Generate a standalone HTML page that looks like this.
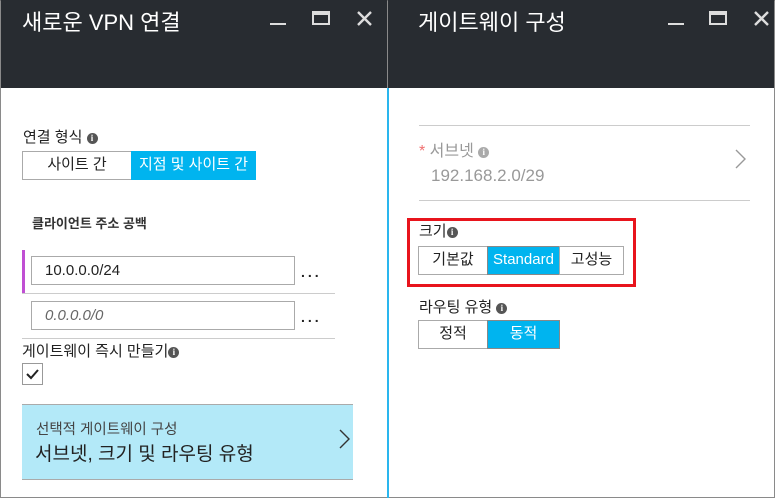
<!DOCTYPE html>
<html><head><meta charset="utf-8"><style>
*{margin:0;padding:0;box-sizing:border-box}
body{width:775px;height:498px;position:relative;background:#fff;font-family:"Segoe UI","Liberation Sans","Noto Sans CJK KR",sans-serif;overflow:hidden;color:#222}
.a{position:absolute}
.hdr{background:#282c31;top:0;height:88px}
.t{color:#fff;font-size:22px;top:5px;white-space:nowrap}
.info{display:inline-block;width:11px;height:11px;border-radius:50%;background:#555;color:#fff;font-size:9px;line-height:11px;text-align:center;font-weight:bold;vertical-align:1px;font-family:"Liberation Serif",serif}
.btn{position:absolute;border:1px solid #aaa;font-size:15px;text-align:center;line-height:26px;background:#fff;white-space:nowrap}
.on{background:#00b4ef;color:#fff;border-color:#00b4ef}
.line{position:absolute;height:1px;background:#ccc}
.dots{position:absolute;font-size:14px;letter-spacing:3px;font-weight:bold}
</style></head><body>
<div class="a" style="left:0;top:0;width:389px;height:498px;border:1px solid #8a8a8a;border-top-color:#555"></div>
<div class="a hdr" style="left:1px;width:387px"></div>
<div class="a t" style="left:22px">새로운 VPN 연결</div>
<div class="a" style="left:270px;top:23px;width:16px;height:2px;background:#ddd"></div>
<div class="a" style="left:312px;top:11px;width:18px;height:14px;border:2px solid #ddd;border-top-width:4px"></div>
<svg class="a" style="left:356px;top:10px" width="17" height="17"><path d="M2 2L15 15M15 2L2 15" stroke="#ddd" stroke-width="2.4"/></svg>

<div class="a" style="left:23px;top:126px;font-size:15px">연결 형식 <span class="info">i</span></div>
<div class="btn" style="left:22px;top:151px;width:110px;height:29px">사이트 간</div>
<div class="btn on" style="left:131px;top:151px;width:125px;height:29px">지점 및 사이트 간</div>
<div class="a" style="left:32px;top:213px;font-size:13px;font-weight:bold;color:#333">클라이언트 주소 공백</div>
<div class="a" style="left:22px;top:250px;width:3px;height:43px;background:#c04fd3"></div>
<div class="a" style="left:31px;top:256px;width:264px;height:29px;border:1px solid #aaa;font-size:15px;line-height:27px;padding-left:13px">10.0.0.0/24</div>
<div class="dots" style="left:301px;top:264px">...</div>
<div class="line" style="left:22px;top:293px;width:313px"></div>
<div class="a" style="left:31px;top:301px;width:264px;height:29px;border:1px solid #aaa;font-size:15px;line-height:27px;padding-left:13px;font-style:italic;color:#666">0.0.0.0/0</div>
<div class="dots" style="left:301px;top:309px">...</div>
<div class="line" style="left:22px;top:338px;width:313px"></div>
<div class="a" style="left:22px;top:340px;font-size:15px">게이트웨이 즉시 만들기<span class="info">i</span></div>
<div class="a" style="left:22px;top:363px;width:21px;height:22px;border:1px solid #999"></div>
<svg class="a" style="left:24px;top:366px" width="17" height="16"><path d="M3 8L7 12L14 4" stroke="#222" stroke-width="2" fill="none"/></svg>
<div class="a" style="left:22px;top:404px;width:331px;height:76px;background:#b3e9f8;border-top:1px solid #aaa;border-bottom:1px solid #aaa"></div>
<div class="a" style="left:36px;top:418px;font-size:14.5px;color:#444">선택적 게이트웨이 구성</div>
<div class="a" style="left:35px;top:439px;font-size:19px;color:#222">서브넷, 크기 및 라우팅 유형</div>
<svg class="a" style="left:338px;top:428px" width="14" height="22"><path d="M2 2L11 11L2 20" stroke="#333" stroke-width="1.4" fill="none"/></svg>

<div class="a" style="left:387px;top:0;width:388px;height:498px;border:1px solid #8a8a8a;border-top-color:#555"></div>
<div class="a" style="left:387px;top:88px;width:2px;height:410px;background:#2ab6ee"></div>
<div class="a hdr" style="left:388px;width:386px"></div>
<div class="a t" style="left:418px">게이트웨이 구성</div>
<div class="a" style="left:668px;top:23px;width:16px;height:2px;background:#ddd"></div>
<div class="a" style="left:709px;top:11px;width:18px;height:14px;border:2px solid #ddd;border-top-width:4px"></div>
<svg class="a" style="left:753px;top:10px" width="17" height="17"><path d="M2 2L15 15M15 2L2 15" stroke="#ddd" stroke-width="2.4"/></svg>

<div class="line" style="left:419px;top:125px;width:331px"></div>
<div class="a" style="left:419px;top:137px;font-size:16px;color:#999"><span style="color:#f07070">*</span> 서브넷 <span class="info" style="background:#aaa">i</span></div>
<div class="a" style="left:431px;top:166px;font-size:17px;color:#999">192.168.2.0/29</div>
<svg class="a" style="left:734px;top:148px" width="14" height="22"><path d="M2 2L11 11L2 20" stroke="#999" stroke-width="1.4" fill="none"/></svg>
<div class="line" style="left:419px;top:200px;width:331px"></div>
<div class="a" style="left:407px;top:218px;width:229px;height:69px;border:3px solid #e8141c"></div>
<div class="a" style="left:419px;top:220px;font-size:15px">크기<span class="info">i</span></div>
<div class="btn" style="left:418px;top:246px;width:70px;height:29px">기본값</div>
<div class="btn on" style="left:487px;top:246px;width:73px;height:29px;border-color:#888">Standard</div>
<div class="btn" style="left:559px;top:246px;width:65px;height:29px">고성능</div>
<div class="a" style="left:419px;top:296px;font-size:15px">라우팅 유형 <span class="info">i</span></div>
<div class="btn" style="left:418px;top:320px;width:70px;height:29px">정적</div>
<div class="btn on" style="left:487px;top:320px;width:73px;height:29px;border-color:#888">동적</div>
</body></html>
